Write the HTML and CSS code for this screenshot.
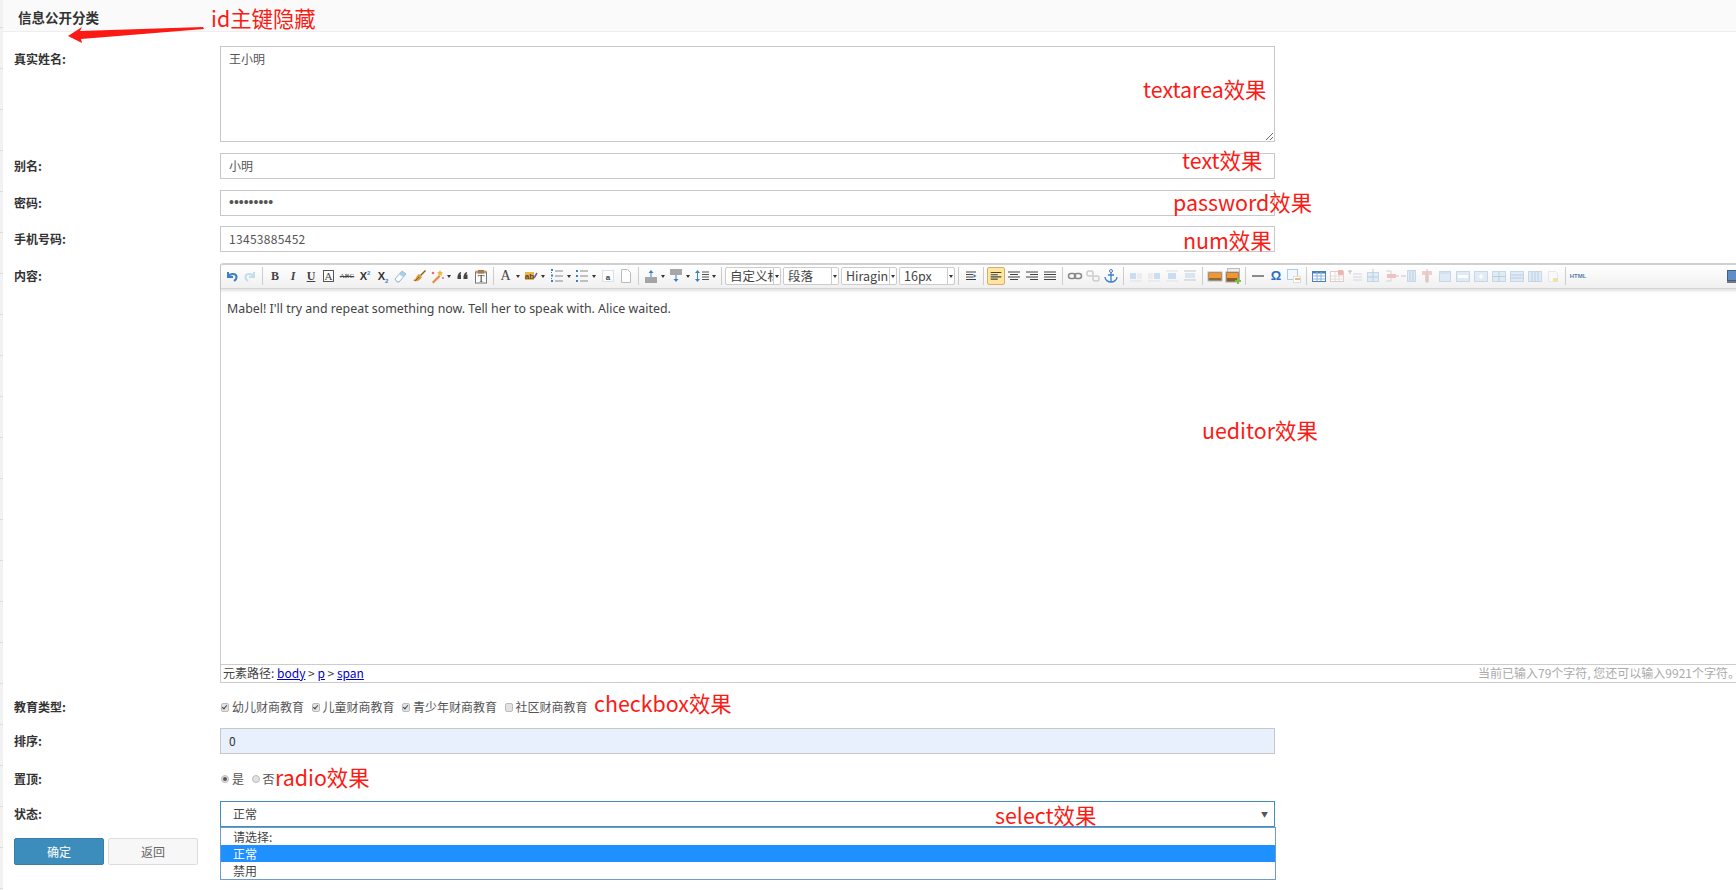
FILE: index.html
```html
<!DOCTYPE html>
<html lang="zh-CN">
<head>
    <meta charset="UTF-8">
    <title>信息公开分类</title>
    <link rel="stylesheet" href="styles.css">
</head>
<body>

<div class="layout">
    <div class="strip"></div>
    <div class="main">
        <div class="page-title">信息公开分类</div>

        <form class="form">
            <div class="row">
                <label class="row-label">真实姓名:</label>
                <textarea class="field field-area">王小明</textarea>
            </div>
            <div class="row">
                <label class="row-label">别名:</label>
                <input class="field" type="text" value="小明">
            </div>
            <div class="row row-tight">
                <label class="row-label">密码:</label>
                <input class="field field-pass" type="password" value="123456789">
            </div>
            <div class="row">
                <label class="row-label">手机号码:</label>
                <input class="field field-num" type="text" value="13453885452">
            </div>

            <div class="row">
                <label class="row-label">内容:</label>
                <div class="editor">
                    <div class="toolbar">
                        <svg class="ic" viewBox="0 0 18 18"><path d="M5 5v5h5M5.500 9.500C7 6 13 6 13.500 9.500c.2 2-1 3.500-2.500 4.500" fill="none" stroke="#3b7fc9" stroke-width="2"/></svg>
                        <svg class="ic" viewBox="0 0 18 18"><path d="M13 5v5H8M12.500 9.500C11 6 5 6 4.500 9.500c-.2 2 1 3.500 2.500 4.500" fill="none" stroke="#c3dcee" stroke-width="2"/></svg>
                        <span class="sep"></span>
                        <span class="tb-text tb-b">B</span>
                        <span class="tb-text tb-i">I</span>
                        <span class="tb-text tb-u">U</span>
                        <svg class="ic" viewBox="0 0 18 18"><rect x="3.500" y="3.500" width="10" height="11" fill="#fff" stroke="#555"/><text x="8.500" y="13" class="svg-serif">A</text></svg>
                        <span class="tb-text tb-abc">ABC</span>
                        <span class="tb-text tb-sup">X<sup>2</sup></span>
                        <span class="tb-text tb-sub">X<sub>2</sub></span>
                        <svg class="ic" viewBox="0 0 18 18"><path d="M3 12l7-8 4 3-7 8H5z" fill="#fff" stroke="#8db3d9"/><path d="M10 4l4 3-3 3-4-3z" fill="#a9cdea"/></svg>
                        <svg class="ic" viewBox="0 0 18 18"><path d="M10 8l5-5 1 1-5 5z" fill="#8a5a22"/><path d="M3 13c3 0 3-4 6-6l3 3c-2 3-4 5-8 4z" fill="#d39b3c"/><path d="M5 14l4-4" stroke="#8a5a22"/></svg>
                        <svg class="ic" viewBox="0 0 18 18"><path d="M4 15l7-7 1.500 1.500-7 7z" fill="#e9873a"/><path d="M12 3l1 2 2 .5-1.500 1.500.5 2-2-1-2 1 .5-2L9 5.500l2-.5z" fill="#f2b544"/><circle cx="5" cy="6" r="1.300" fill="#e86a7a"/><circle cx="15" cy="11" r="1" fill="#e86a7a"/></svg>
                        <span class="caret"></span>
                        <svg class="ic" viewBox="0 0 18 18"><path d="M4 8.500c0-2 1-3 3-3.500v1.500c-.7.200-1 .5-1 1h1V12H3.500V8.500zM10 8.500c0-2 1-3 3-3.500v1.500c-.7.200-1 .5-1 1h1.500V12h-4V8.500z" fill="#444"/></svg>
                        <svg class="ic" viewBox="0 0 18 18"><rect x="3.500" y="5" width="11" height="11" fill="#fff" stroke="#777"/><rect x="6" y="3" width="6" height="3.500" fill="#9a6a3a"/><rect x="3.500" y="3.500" width="11" height="3" fill="#b08a5a" opacity=".6"/><text x="9" y="15" class="svg-serif">T</text></svg>
                        <span class="sep"></span>
                        <span class="tb-text tb-a">A</span>
                        <span class="caret"></span>
                        <svg class="ic" viewBox="0 0 18 18"><rect x="3" y="5" width="9" height="8" fill="#f2b544"/><text x="7.500" y="12" class="svg-small">ab</text><path d="M12 11l3-5" stroke="#7a5a9a" stroke-width="1.500"/></svg>
                        <span class="caret"></span>
                        <svg class="ic" viewBox="0 0 18 18"><path d="M3 3h2M3 8.500h2M3 14h2" stroke="#3b7fc9" stroke-width="2"/><path d="M3.500 5v1M3.500 11v1" stroke="#3b7fc9"/><path d="M7 4h8M7 9h8M7 14h8" stroke="#888"/></svg>
                        <span class="caret"></span>
                        <svg class="ic" viewBox="0 0 18 18"><path d="M3 4h2M3 9h2M3 14h2" stroke="#3b7fc9" stroke-width="2"/><path d="M7 4h8M7 9h8M7 14h8" stroke="#888"/></svg>
                        <span class="caret"></span>
                        <svg class="ic" viewBox="0 0 18 18"><rect x="3.500" y="3.500" width="11" height="11" fill="#fff" stroke="#a9cdea" stroke-dasharray="1 1"/><text x="9" y="12.500" class="svg-small">a</text></svg>
                        <svg class="ic" viewBox="0 0 18 18"><path d="M4.500 2.500h6l3 3v10h-9z" fill="#fff" stroke="#bbb"/></svg>
                        <span class="sep"></span>
                        <svg class="ic" viewBox="0 0 18 18"><path d="M9 3l2.500 3h-5z" fill="#3b7fc9"/><path d="M9 6v4" stroke="#3b7fc9"/><path d="M3 11h12M3 13h12M3 15h12" stroke="#555"/></svg>
                        <span class="caret"></span>
                        <svg class="ic" viewBox="0 0 18 18"><path d="M3 3h12M3 5h12M3 7h12" stroke="#555"/><path d="M9 8v4" stroke="#3b7fc9"/><path d="M9 15l2.500-3h-5z" fill="#3b7fc9"/></svg>
                        <span class="caret"></span>
                        <svg class="ic" viewBox="0 0 18 18"><path d="M4.500 3L7 6H2zM4.500 15L7 12H2z" fill="#3b7fc9"/><path d="M4.500 6v6" stroke="#3b7fc9"/><path d="M9 5h7M9 7.500h7M9 10h7M9 12.500h7" stroke="#555"/></svg>
                        <span class="caret"></span>
                        <span class="sep"></span>

                        <div class="combo combo-first"><span class="combo-text">自定义标题</span><span class="combo-btn"></span></div>
                        <div class="combo"><span class="combo-text">段落</span><span class="combo-btn"></span></div>
                        <div class="combo"><span class="combo-text">Hiragin</span><span class="combo-btn"></span></div>
                        <div class="combo"><span class="combo-text">16px</span><span class="combo-btn"></span></div>
                        <span class="sep"></span>

                        <svg class="ic" viewBox="0 0 18 18"><path d="M4 5h10M4 7.500h7M4 10h7M4 12.500h10" stroke="#444" stroke-width="1.200"/><path d="M11.500 7l3 2-3 2z" fill="#3b7fc9"/></svg>
                        <span class="sep"></span>
                        <svg class="ic ic-active" viewBox="0 0 18 18"><path d="M3 5h12M3 7.500h8M3 10h12M3 12.500h8" class="align-line"/></svg>
                        <svg class="ic" viewBox="0 0 18 18"><path d="M3 5h12M5 7.500h8M3 10h12M5 12.500h8" class="align-line"/></svg>
                        <svg class="ic" viewBox="0 0 18 18"><path d="M3 5h12M7 7.500h8M3 10h12M7 12.500h8" class="align-line"/></svg>
                        <svg class="ic" viewBox="0 0 18 18"><path d="M3 5h12M3 7.500h12M3 10h12M3 12.500h12" class="align-line"/></svg>
                        <span class="sep"></span>

                        <svg class="ic" viewBox="0 0 18 18"><rect x="2.500" y="6.500" width="7" height="5" rx="2.500" fill="none" stroke="#888" stroke-width="1.500"/><rect x="8.500" y="6.500" width="7" height="5" rx="2.500" fill="none" stroke="#888" stroke-width="1.500"/></svg>
                        <svg class="ic" viewBox="0 0 18 18"><rect x="3" y="4" width="6" height="5" rx="2" fill="none" stroke="#ccc" stroke-width="1.500"/><rect x="9" y="9" width="6" height="5" rx="2" fill="none" stroke="#ccc" stroke-width="1.500"/></svg>
                        <svg class="ic" viewBox="0 0 18 18"><circle cx="9" cy="4" r="1.500" fill="none" stroke="#3b7fc9"/><path d="M9 5.500V15M6 8h6M3 10c0 3 3 5 6 5s6-2 6-5" fill="none" stroke="#3b7fc9" stroke-width="1.300"/></svg>
                        <span class="sep"></span>

                        <svg class="ic ic-faded" viewBox="0 0 18 18"><rect x="3" y="6" width="6" height="6" fill="#bcd9f2"/><path d="M10 7h5M10 9h5M10 11h5M3 14h12" stroke="#ddd"/></svg>
                        <svg class="ic ic-faded" viewBox="0 0 18 18"><rect x="9" y="6" width="6" height="6" fill="#bcd9f2"/><path d="M3 7h5M3 9h5M3 11h5M3 14h12" stroke="#ddd"/></svg>
                        <svg class="ic ic-faded" viewBox="0 0 18 18"><rect x="5" y="6" width="8" height="6" fill="#bcd9f2"/><path d="M3 4h12M3 14h12" stroke="#ddd"/></svg>
                        <svg class="ic ic-faded" viewBox="0 0 18 18"><rect x="4" y="6" width="10" height="5" fill="#cfe2f2"/><path d="M3 4h12M3 13h12" stroke="#bbb"/></svg>
                        <span class="sep"></span>

                        <svg class="ic" viewBox="0 0 18 18"><rect x="2" y="5" width="14" height="9" fill="#8a6a40" stroke="#bbb"/><rect x="3" y="6" width="12" height="5" fill="#f2962e"/></svg>
                        <svg class="ic" viewBox="0 0 18 18"><rect x="3.500" y="1.500" width="12" height="12" fill="#eee" stroke="#bbb"/><rect x="2" y="5" width="13" height="10" fill="#8a5a28" stroke="#aaa"/><rect x="3" y="6" width="11" height="5" fill="#f2962e"/><path d="M14 11v6M11 14h6" stroke="#7ac143" stroke-width="2"/></svg>
                        <span class="sep"></span>

                        <svg class="ic" viewBox="0 0 18 18"><path d="M3 9h12" stroke="#666" stroke-width="1.500"/></svg>
                        <span class="tb-text tb-omega">Ω</span>
                        <svg class="ic" viewBox="0 0 18 18"><rect x="2.500" y="2.500" width="10" height="10" fill="#f4f8fc" stroke="#a9cdea"/><rect x="8.500" y="9.500" width="7" height="6" fill="#fff" stroke="#ddd"/><rect x="10" y="11" width="5" height="2" fill="#f2b57a"/></svg>
                        <span class="sep"></span>

                        <svg class="ic" viewBox="0 0 18 18"><rect x="2.500" y="4.500" width="13" height="10" fill="#fff" stroke="#4a7fb8"/><path d="M2.500 5.500h13" stroke="#4a7fb8" stroke-width="2"/><path d="M2.500 9h13M2.500 12h13M7 5v9M11 5v9" stroke="#8db3d9"/></svg>
                        <svg class="ic ic-faded" viewBox="0 0 18 18"><rect x="2.500" y="4.500" width="13" height="10" fill="#fff" stroke="#d8c0c0"/><path d="M2.500 9h13M2.500 12h13M7 5v9M11 5v9" stroke="#e4d4d4"/><rect x="10" y="3" width="5" height="5" fill="#f2a0a0"/></svg>
                        <svg class="ic ic-faded" viewBox="0 0 18 18"><path d="M2 4h4M4 4v3" stroke="#aaa"/><path d="M7 7h9M7 10h9M7 13h9" stroke="#ccd"/></svg>
                        <svg class="ic ic-faded" viewBox="0 0 18 18"><rect x="3.500" y="5.500" width="11" height="9" fill="#dbe8f4" stroke="#bcd0e4"/><path d="M9 2v13M3.500 10h11" stroke="#a9c4de"/></svg>
                        <svg class="ic ic-faded" viewBox="0 0 18 18"><path d="M4 4h5v10H4" fill="none" stroke="#ccc"/><rect x="5" y="7" width="9" height="4" fill="#f0b4b4"/><path d="M14 9h3" stroke="#bbb"/></svg>
                        <svg class="ic ic-faded" viewBox="0 0 18 18"><path d="M1 9h5" stroke="#bbb"/><rect x="7.500" y="3.500" width="8" height="11" fill="#dbe8f4" stroke="#bcd0e4"/><path d="M10 4v10M13 4v10" stroke="#a9c4de"/></svg>
                        <svg class="ic ic-faded" viewBox="0 0 18 18"><path d="M4 4h10v4H11v7H7V8H4z" fill="#f0c4c4"/><path d="M9 2v14" stroke="#bbb"/></svg>
                        <svg class="ic ic-faded" viewBox="0 0 18 18"><rect x="3.500" y="4.500" width="11" height="10" fill="#dbe8f4" stroke="#bcd0e4"/><path d="M3.500 6h11" stroke="#bcd0e4"/></svg>
                        <svg class="ic ic-faded" viewBox="0 0 18 18"><rect x="2.500" y="4.500" width="13" height="10" fill="#dbe8f4" stroke="#bcd0e4"/><rect x="4" y="8" width="10" height="3" fill="#fff"/></svg>
                        <svg class="ic ic-faded" viewBox="0 0 18 18"><rect x="2.500" y="4.500" width="13" height="10" fill="#dbe8f4" stroke="#bcd0e4"/><path d="M9 7v5M6.500 9.500h5" stroke="#fff" stroke-width="1.500"/></svg>
                        <svg class="ic ic-faded" viewBox="0 0 18 18"><rect x="2.500" y="4.500" width="13" height="10" fill="#dbe8f4" stroke="#bcd0e4"/><path d="M2.500 9.500h13M9 4.500v10" stroke="#a9c4de"/></svg>
                        <svg class="ic ic-faded" viewBox="0 0 18 18"><rect x="2.500" y="4.500" width="13" height="10" fill="#dbe8f4" stroke="#bcd0e4"/><path d="M2.500 8h13M2.500 11h13" stroke="#a9c4de"/></svg>
                        <svg class="ic ic-faded" viewBox="0 0 18 18"><rect x="2.500" y="4.500" width="13" height="10" fill="#dbe8f4" stroke="#bcd0e4"/><path d="M6 4.500v10M9 4.500v10M12 4.500v10" stroke="#a9c4de"/></svg>
                        <svg class="ic ic-faded" viewBox="0 0 18 18"><path d="M4.500 4.500h7l2 2v8h-9z" fill="#fafafa" stroke="#e4e4e4"/><rect x="9" y="11" width="5" height="4" fill="#eedc9a"/></svg>
                        <span class="sep"></span>
                        <span class="tb-text tb-html">HTML</span>
                        <svg class="ic ic-last" viewBox="0 0 18 18"><rect x="1.500" y="3.500" width="15" height="10" fill="#5f8fc4" stroke="#3d5f8a"/><path d="M1 15h16" stroke="#777" stroke-width="2"/></svg>
                    </div>

                    <div class="editor-body">
                        <p>Mabel! I'll try and repeat something now. Tell her to speak with. Alice waited.</p>
                    </div>

                    <div class="statusbar">
                        <span>元素路径: <a href="#">body</a> &gt; <a href="#">p</a> &gt; <a href="#">span</a></span>
                        <span class="word-count">当前已输入79个字符, 您还可以输入9921个字符。</span>
                    </div>
                </div>
            </div>

            <div class="row row-checks">
                <label class="row-label">教育类型:</label>
                <div class="choices">
                    <label class="choice"><input type="checkbox" checked>幼儿财商教育</label>
                    <label class="choice"><input type="checkbox" checked>儿童财商教育</label>
                    <label class="choice"><input type="checkbox" checked>青少年财商教育</label>
                    <label class="choice"><input type="checkbox">社区财商教育</label>
                </div>
            </div>
            <div class="row row-sort">
                <label class="row-label">排序:</label>
                <input class="field field-filled" type="text" value="0">
            </div>
            <div class="row row-radio">
                <label class="row-label">置顶:</label>
                <div class="choices">
                    <label class="choice"><input type="radio" name="top" checked>是</label>
                    <label class="choice"><input type="radio" name="top">否</label>
                </div>
            </div>
            <div class="row row-select">
                <label class="row-label">状态:</label>
                <div class="select">
                    <span>正常</span>
                    <span class="select-arrow">▼</span>
                    <ul class="select-menu">
                        <li>请选择:</li>
                        <li class="selected">正常</li>
                        <li>禁用</li>
                    </ul>
                </div>
            </div>

            <div class="actions">
                <button class="btn btn-primary" type="button">确定</button>
                <button class="btn" type="button">返回</button>
            </div>
        </form>
    </div>
</div>

<!-- red notes drawn over the screenshot -->
<svg class="note-arrow" viewBox="0 0 220 50"><polygon points="68,36 82,27 80,31 203,27 204,29 81,39 82,43" fill="#fb1a14"/></svg>
<span class="note note-id">id主键隐藏</span>
<span class="note note-textarea">textarea效果</span>
<span class="note note-text">text效果</span>
<span class="note note-password">password效果</span>
<span class="note note-num">num效果</span>
<span class="note note-ueditor">ueditor效果</span>
<span class="note note-checkbox">checkbox效果</span>
<span class="note note-radio">radio效果</span>
<span class="note note-select">select效果</span>

</body>
</html>
```

FILE: styles.css
```css
html, body {
    margin: 0;
    height: 100%;
    overflow: hidden;
    background: #fff;
    color: #555;
    font-family: "Noto Sans CJK SC", "Noto Sans", sans-serif;
    font-size: 12px;
}

.layout {
    display: flex;
    height: 890px;
}

.strip {
    flex: 0 0 3px;
    background: repeating-linear-gradient(#f2f2f2 0, #f2f2f2 27px, #dcdcdc 27px, #dcdcdc 28px, #f2f2f2 28px, #f2f2f2 41px);
}

.main {
    flex: 1;
    min-width: 0;
}

.page-title {
    height: 31px;
    line-height: 34px;
    padding-left: 15px;
    background: #fafafa;
    border-bottom: 1px solid #eee;
    color: #333;
    font-size: 13.500px;
    font-weight: bold;
}

.form {
    padding: 14px 0 0 11px;
}

.row {
    display: flex;
    align-items: flex-start;
    margin-bottom: 11px;
}

.row-tight {
    margin-bottom: 10px;
}

.row-checks {
    margin: 11px 0 8px;
}

.row-sort {
    margin-bottom: 12px;
}

.row-radio {
    margin-bottom: 9px;
}

.row-select {
    margin-bottom: 11px;
}

.row-label {
    flex: 0 0 206px;
    line-height: 26px;
    color: #333;
    font-weight: bold;
}

.field {
    box-sizing: border-box;
    display: block;
    width: 1055px;
    height: 26px;
    margin: 0;
    padding: 0 8px 2px;
    border: 1px solid #c8c8c8;
    border-radius: 0;
    outline: none;
    color: #555;
    background: #fff;
    font-family: inherit;
    font-size: 12px;
}

.field-area {
    height: 96px;
    padding: 4px 8px;
    line-height: 16px;
}

.field-pass {
    font-family: "Liberation Sans", sans-serif;
    font-size: 14px;
}

.field-num {
    letter-spacing: 0.3px;
}

.field-filled {
    background: #e8f0fe;
    color: #333;
}

/* editor */
.editor {
    box-sizing: border-box;
    flex: 0 0 1530px;
    width: 1530px;
    border: 1px solid #ccc;
    border-top: 0;
    border-radius: 3px 3px 0 0;
}

.toolbar {
    box-sizing: border-box;
    display: flex;
    align-items: center;
    height: 26px;
    padding: 0 5px 1px 2px;
    border-top: 2px solid #d0d0d0;
    border-bottom: 1px solid #d4d4d4;
    border-radius: 3px 3px 0 0;
    background: linear-gradient(#fff, #f0f0f0);
    box-shadow: 0 2px 3px rgba(0, 0, 0, 0.12);
}

.ic {
    flex: 0 0 18px;
    width: 18px;
    height: 18px;
}

.ic-active {
    box-sizing: border-box;
    border: 1px solid #dcac6c;
    border-radius: 2px;
    background: #ffe69f;
}

.ic-faded {
    opacity: 0.8;
}

.ic-last {
    margin-left: auto;
}

.align-line {
    fill: none;
    stroke: #444;
    stroke-width: 1.200;
}

.svg-serif {
    font-family: "Liberation Serif", serif;
    font-size: 11px;
    text-anchor: middle;
    fill: #444;
}

.svg-small {
    font-family: "Liberation Sans", sans-serif;
    font-size: 8px;
    font-weight: bold;
    text-anchor: middle;
    fill: #444;
}

.sep {
    flex: 0 0 7px;
    height: 18px;
    background: linear-gradient(#ccc, #ccc) center / 1px 100% no-repeat;
}

.caret {
    flex: 0 0 7.5px;
    height: 18px;
    position: relative;
}

.caret::after {
    content: "";
    position: absolute;
    left: 1px;
    top: 8px;
    border: 2.5px solid transparent;
    border-top: 3px solid #333;
    border-bottom: 0;
}

.tb-text {
    flex: 0 0 18px;
    width: 18px;
    height: 18px;
    line-height: 18px;
    text-align: center;
    color: #444;
    font-family: "Liberation Serif", serif;
    font-size: 12px;
}

.tb-b {
    font-weight: bold;
}

.tb-i {
    font-style: italic;
    font-weight: bold;
}

.tb-u {
    font-weight: bold;
    text-decoration: underline;
}

.tb-abc {
    font-size: 7px;
    text-decoration: line-through;
}

.tb-sup, .tb-sub {
    font-family: "Liberation Sans", sans-serif;
    font-weight: bold;
    font-size: 11px;
    color: #333;
}

.tb-sup sup, .tb-sub sub {
    font-size: 6px;
    line-height: 0;
    color: #3b7fc9;
}

.tb-a {
    font-size: 14px;
}

.tb-omega {
    color: #2a6fc4;
    font-family: "Liberation Sans", sans-serif;
    font-weight: bold;
    font-size: 13px;
}

.tb-html {
    color: #5a7fa8;
    font-family: "Liberation Sans", sans-serif;
    font-weight: bold;
    font-size: 6px;
}

.combo {
    box-sizing: border-box;
    flex: 0 0 56px;
    display: flex;
    width: 56px;
    height: 18px;
    margin-right: 2px;
    border: 1px solid #ccc;
    border-radius: 2px;
    background: #fff;
    color: #444;
    font-size: 12.500px;
    line-height: 16px;
}

.combo:last-of-type {
    margin-right: 0;
}

.combo-text {
    flex: 1;
    min-width: 0;
    overflow: hidden;
    white-space: nowrap;
    padding-left: 4px;
}

.combo-btn {
    flex: 0 0 6px;
    position: relative;
    border-left: 1px solid #ccc;
}

.combo-btn::after {
    content: "";
    position: absolute;
    left: 1px;
    top: 7px;
    border: 2px solid transparent;
    border-top: 3px solid #333;
    border-bottom: 0;
}

.editor-body {
    box-sizing: border-box;
    height: 375px;
    padding: 11px 6px;
    color: #444;
    font-family: "Noto Sans", sans-serif;
    font-size: 12.400px;
    line-height: 18px;
}

.editor-body p {
    margin: 0;
}

.statusbar {
    display: flex;
    justify-content: space-between;
    box-sizing: border-box;
    height: 18px;
    padding: 0 9px 0 2px;
    border-top: 1px solid #ccc;
    color: #444;
    line-height: 16px;
}

.statusbar a {
    color: #00c;
}

.word-count {
    color: #aaa;
}

/* checkbox and radio */
.choices {
    display: flex;
    line-height: 26px;
}

.choice {
    display: flex;
    align-items: center;
    margin-right: 6.500px;
    color: #555;
}

.choice input {
    appearance: none;
    position: relative;
    box-sizing: border-box;
    width: 8px;
    height: 9px;
    margin: 0 3px 0 1px;
    border: 1px solid #bbb;
    border-radius: 2px;
    background: #e2e2e2;
}

.choice input[type="radio"] {
    width: 8px;
    height: 8px;
    border-radius: 50%;
}

.choice input[type="checkbox"]:checked::after {
    content: "";
    position: absolute;
    left: 1px;
    top: 0;
    width: 2px;
    height: 4px;
    border: solid #444;
    border-width: 0 1.500px 1.500px 0;
    transform: rotate(40deg);
}

.choice input[type="radio"]:checked::after {
    content: "";
    position: absolute;
    left: 1px;
    top: 1px;
    width: 4px;
    height: 4px;
    border-radius: 50%;
    background: #555;
}

/* select, shown open */
.select {
    box-sizing: border-box;
    position: relative;
    display: flex;
    justify-content: space-between;
    width: 1055px;
    height: 26px;
    padding: 0 6px 0 12px;
    border: 1px solid #438eb9;
    line-height: 24px;
    color: #444;
}

.select-arrow {
    color: #555;
    font-size: 7px;
}

.select-menu {
    box-sizing: border-box;
    position: absolute;
    left: -1px;
    top: 25px;
    width: 1056px;
    height: 53px;
    margin: 0;
    padding: 0;
    list-style: none;
    background: #fff;
    border: 1px solid #6d9bd3;
    z-index: 5;
}

.select-menu li {
    height: 17px;
    padding-left: 12px;
    line-height: 17px;
}

.select-menu li.selected {
    background: #1e90ff;
    color: #fff;
}

/* buttons */
.actions {
    display: flex;
    gap: 4px;
}

.btn {
    box-sizing: border-box;
    width: 90px;
    height: 27px;
    border: 1px solid #ddd;
    border-radius: 2px;
    background: #f7f7f7;
    color: #666;
    font-family: inherit;
    font-size: 12px;
}

.btn-primary {
    border-color: #367fa9;
    background: #3c8dbc;
    color: #fff;
}

/* red notes over the picture */
.note {
    position: absolute;
    color: #fb1a14;
    font-size: 21.400px;
    line-height: 28px;
    white-space: nowrap;
    z-index: 10;
}

.note-arrow {
    position: absolute;
    left: 0;
    top: 0;
    width: 220px;
    height: 50px;
    z-index: 10;
}

.note-id { left: 211px; top: 4px; }
.note-textarea { left: 1143px; top: 75px; }
.note-text { left: 1182px; top: 146px; }
.note-password { left: 1173px; top: 188px; }
.note-num { left: 1183px; top: 226px; }
.note-ueditor { left: 1202px; top: 416px; }
.note-checkbox { left: 594px; top: 689px; }
.note-radio { left: 275px; top: 763px; }
.note-select { left: 995px; top: 801px; }
```
